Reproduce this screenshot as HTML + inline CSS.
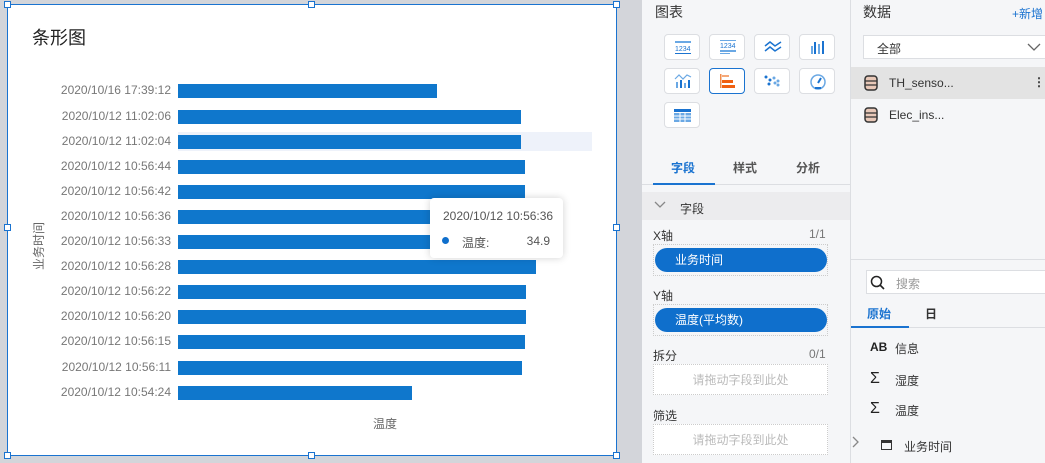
<!DOCTYPE html>
<html><head><meta charset="utf-8"><style>
*{margin:0;padding:0;box-sizing:border-box}
body{width:1045px;height:463px;overflow:hidden;background:#d3d5da;font-family:"Liberation Sans","Noto Sans CJK SC",sans-serif;position:relative;font-size:12px;color:#333}
.abs{position:absolute}
.card{left:7px;top:4px;width:610px;height:452px;background:#fff;border:1px solid #1a73d0}
.h{position:absolute;width:7px;height:7px;background:#fff;border:1px solid #1a73d0}
.lbl{position:absolute;left:40px;width:131px;text-align:right;font-size:12px;color:#777;line-height:14px}
.bar{position:absolute;left:178px;height:14px;background:#0f77cc}
.panel{left:642px;top:0;width:208px;height:463px;background:#f5f6f8}
.panel2{left:850px;top:0;width:195px;height:463px;background:#f5f6f8;border-left:1px solid #dcdee2}
.btn{position:absolute;width:36px;height:26px;background:#fff;border:1px solid #dcdee2;border-radius:4px}
.btn svg{position:absolute;left:8px;top:3px}
.pill{position:absolute;left:655px;width:172px;height:24px;background:#0f6fcc;border-radius:12px;color:#fff;font-size:12px;line-height:24px;padding-left:20px}
.drop{position:absolute;left:653px;width:175px;height:31px;border:1px dotted #ccc;background:#fff;color:#bbb;text-align:center;line-height:31px;font-size:12px}
</style></head><body>
<div class="abs card"></div>
<div class="h" style="left:4px;top:1px"></div><div class="h" style="left:308px;top:1px"></div><div class="h" style="left:613px;top:1px"></div>
<div class="h" style="left:4px;top:224px"></div><div class="h" style="left:613px;top:224px"></div>
<div class="h" style="left:4px;top:452px"></div><div class="h" style="left:308px;top:452px"></div><div class="h" style="left:613px;top:452px"></div>
<div class="abs" style="left:32px;top:24px;font-size:18px;color:#222">条形图</div>
<div class="abs" style="left:178px;top:132px;width:414px;height:19px;background:#eef2fa"></div>
<div class="abs" style="left:30px;top:270px;transform:rotate(-90deg);transform-origin:left top;font-size:12px;color:#666;width:60px">业务时间</div>
<div class="lbl" style="top:83px">2020/10/16 17:39:12</div><div class="bar" style="top:84px;width:259px"></div>
<div class="lbl" style="top:109px">2020/10/12 11:02:06</div><div class="bar" style="top:110px;width:343px"></div>
<div class="lbl" style="top:134px">2020/10/12 11:02:04</div><div class="bar" style="top:135px;width:343px"></div>
<div class="lbl" style="top:159px">2020/10/12 10:56:44</div><div class="bar" style="top:160px;width:347px"></div>
<div class="lbl" style="top:184px">2020/10/12 10:56:42</div><div class="bar" style="top:185px;width:347px"></div>
<div class="lbl" style="top:209px">2020/10/12 10:56:36</div><div class="bar" style="top:210px;width:347px"></div>
<div class="lbl" style="top:234px">2020/10/12 10:56:33</div><div class="bar" style="top:235px;width:347px"></div>
<div class="lbl" style="top:259px">2020/10/12 10:56:28</div><div class="bar" style="top:260px;width:358px"></div>
<div class="lbl" style="top:284px">2020/10/12 10:56:22</div><div class="bar" style="top:285px;width:348px"></div>
<div class="lbl" style="top:309px">2020/10/12 10:56:20</div><div class="bar" style="top:310px;width:348px"></div>
<div class="lbl" style="top:334px">2020/10/12 10:56:15</div><div class="bar" style="top:335px;width:347px"></div>
<div class="lbl" style="top:360px">2020/10/12 10:56:11</div><div class="bar" style="top:361px;width:344px"></div>
<div class="lbl" style="top:385px">2020/10/12 10:54:24</div><div class="bar" style="top:386px;width:234px"></div>
<div class="abs" style="left:373px;top:415px;color:#666">温度</div>
<div class="abs" style="left:430px;top:198px;width:133px;height:60px;background:#fff;border-radius:4px;box-shadow:0 0 8px rgba(0,0,0,.18)">
<div class="abs" style="left:13px;top:11px;color:#555">2020/10/12 10:56:36</div>
<div class="abs" style="left:12px;top:39px;width:7px;height:7px;border-radius:50%;background:#0f6fcc"></div>
<div class="abs" style="left:32px;top:36px;color:#555">温度:</div>
<div class="abs" style="right:13px;top:36px;color:#555">34.9</div>
</div>
<div class="abs panel"></div>
<div class="abs" style="left:655px;top:2px;font-size:14px;color:#333">图表</div>
<div class="btn" style="left:664px;top:34px"><svg width="20" height="18"><rect x="2" y="3" width="16" height="2" fill="#6aa8e4"/><text x="2" y="13" font-size="7" fill="#1a73d0" font-family="Liberation Sans">1234</text><rect x="2" y="15" width="16" height="1" fill="#1a73d0"/></svg></div>
<div class="btn" style="left:709px;top:34px"><svg width="20" height="18"><rect x="2" y="2" width="16" height="1" fill="#6aa8e4"/><text x="2" y="10" font-size="7" fill="#1a73d0" font-family="Liberation Sans">1234</text><rect x="2" y="12" width="16" height="2" fill="#6aa8e4"/><rect x="2" y="15" width="10" height="1" fill="#6aa8e4"/></svg></div>
<div class="btn" style="left:754px;top:34px"><svg width="20" height="18"><path d="M2 8 L7 4 L12 8 L18 4 M2 13 L7 9 L12 13 L18 9" stroke="#1a73d0" stroke-width="1.5" fill="none"/></svg></div>
<div class="btn" style="left:799px;top:34px"><svg width="20" height="18"><rect x="3" y="8" width="2" height="8" fill="#6aa8e4"/><rect x="6" y="4" width="2" height="12" fill="#1a73d0"/><rect x="10" y="6" width="2" height="10" fill="#6aa8e4"/><rect x="14" y="3" width="2" height="13" fill="#1a73d0"/></svg></div>
<div class="btn" style="left:664px;top:68px"><svg width="20" height="18"><path d="M2 7 L6 3 L10 7 L14 3 L18 5" stroke="#6aa8e4" stroke-width="1.2" fill="none"/><rect x="3" y="10" width="2" height="6" fill="#6aa8e4"/><rect x="7" y="8" width="2" height="8" fill="#1a73d0"/><rect x="11" y="11" width="2" height="5" fill="#6aa8e4"/><rect x="15" y="8" width="2" height="8" fill="#1a73d0"/></svg></div>
<div class="btn" style="left:709px;top:68px;border-color:#1a73d0"><svg width="20" height="18"><rect x="2" y="2" width="1.5" height="14" fill="#f08c4b"/><rect x="4" y="3" width="7" height="2" fill="#f5a878"/><rect x="4" y="8" width="11" height="3" fill="#f06010"/><rect x="4" y="13" width="13" height="3" fill="#f06010"/></svg></div>
<div class="btn" style="left:754px;top:68px"><svg width="20" height="18"><circle cx="3" cy="5" r="1.5" fill="#1a73d0"/><circle cx="7" cy="8" r="1.5" fill="#1a73d0"/><circle cx="11" cy="6" r="1.5" fill="#6aa8e4"/><circle cx="15" cy="9" r="1.5" fill="#6aa8e4"/><circle cx="6" cy="12" r="1.5" fill="#1a73d0"/><circle cx="12" cy="11" r="1.5" fill="#6aa8e4"/><circle cx="15" cy="13" r="1.5" fill="#6aa8e4"/></svg></div>
<div class="btn" style="left:799px;top:68px"><svg width="20" height="18"><circle cx="10" cy="10" r="7" stroke="#6aa8e4" stroke-width="1.5" fill="none"/><path d="M10 11 L13 6" stroke="#1a73d0" stroke-width="2"/><rect x="7" y="15" width="6" height="2" fill="#1a73d0"/></svg></div>
<div class="btn" style="left:664px;top:102px"><svg width="20" height="18"><rect x="1" y="3" width="17" height="3" fill="#1a73d0"/><rect x="1" y="7" width="17" height="9" fill="#6aa8e4"/><path d="M1 10H18M1 13H18M7 7V16M12 7V16" stroke="#fff" stroke-width="1"/></svg></div>
<div class="abs" style="left:671px;top:159px;color:#1a73d0;font-weight:bold">字段</div>
<div class="abs" style="left:733px;top:159px;color:#555;font-weight:bold">样式</div>
<div class="abs" style="left:796px;top:159px;color:#555;font-weight:bold">分析</div>
<div class="abs" style="left:642px;top:184px;width:208px;height:1px;background:#dcdee2"></div>
<div class="abs" style="left:653px;top:183px;width:62px;height:2px;background:#1a73d0"></div>
<div class="abs" style="left:642px;top:192px;width:208px;height:28px;background:#ececee"></div>
<svg class="abs" style="left:654px;top:201px" width="12" height="8"><path d="M1 1 L6 6 L11 1" stroke="#888" stroke-width="1.3" fill="none"/></svg>
<div class="abs" style="left:680px;top:200px;color:#333">字段</div>
<div class="abs" style="left:653px;top:227px">X轴</div><div class="abs" style="left:809px;top:227px;color:#777">1/1</div>
<div class="abs" style="left:653px;top:244px;width:175px;height:32px;border:1px dotted #ccc"></div>
<div class="pill" style="top:248px">业务时间</div>
<div class="abs" style="left:653px;top:287px">Y轴</div>
<div class="abs" style="left:653px;top:304px;width:175px;height:32px;border:1px dotted #ccc"></div>
<div class="pill" style="top:308px">温度(平均数)</div>
<div class="abs" style="left:653px;top:347px">拆分</div><div class="abs" style="left:809px;top:347px;color:#777">0/1</div>
<div class="drop" style="top:364px">请拖动字段到此处</div>
<div class="abs" style="left:653px;top:407px">筛选</div>
<div class="drop" style="top:424px">请拖动字段到此处</div>
<div class="abs panel2"></div>
<div class="abs" style="left:863px;top:2px;font-size:14px;color:#333">数据</div>
<div class="abs" style="left:1012px;top:5px;color:#1a73d0">+新增</div>
<div class="abs" style="left:863px;top:35px;width:185px;height:24px;background:#fff;border:1px solid #dcdee2;padding:4px 13px">全部</div>
<svg class="abs" style="left:1027px;top:43px" width="14" height="8"><path d="M1 1 L7 7 L13 1" stroke="#666" stroke-width="1.3" fill="none"/></svg>
<div class="abs" style="left:851px;top:67px;width:194px;height:32px;background:#e3e3e3"></div>
<svg class="abs" style="left:864px;top:75px" width="14" height="16"><rect x="1" y="1" width="12" height="14" rx="3" fill="#e8c8b8" stroke="#333" stroke-width="1.5"/><path d="M1 6H13M1 10H13" stroke="#333" stroke-width="1.2"/></svg>
<div class="abs" style="left:889px;top:76px;color:#333">TH_senso...</div>
<div class="abs" style="left:1033px;top:75px;font-weight:bold">⋮</div>
<svg class="abs" style="left:864px;top:107px" width="14" height="16"><rect x="1" y="1" width="12" height="14" rx="3" fill="#e8c8b8" stroke="#333" stroke-width="1.5"/><path d="M1 6H13M1 10H13" stroke="#333" stroke-width="1.2"/></svg>
<div class="abs" style="left:889px;top:108px;color:#333">Elec_ins...</div>
<div class="abs" style="left:851px;top:259px;width:194px;height:1px;background:#dcdee2"></div>
<div class="abs" style="left:866px;top:270px;width:180px;height:24px;background:#fff;border:1px solid #dcdee2"></div>
<svg class="abs" style="left:870px;top:275px" width="16" height="16"><circle cx="6.5" cy="6.5" r="5" stroke="#222" stroke-width="1.5" fill="none"/><path d="M10 10 L14 14" stroke="#222" stroke-width="1.6"/></svg>
<div class="abs" style="left:896px;top:275px;color:#999">搜索</div>
<div class="abs" style="left:867px;top:305px;color:#1a73d0;font-weight:bold">原始</div>
<div class="abs" style="left:925px;top:305px;color:#333;font-weight:bold">日</div>
<div class="abs" style="left:851px;top:327px;width:194px;height:1px;background:#dcdee2"></div>
<div class="abs" style="left:851px;top:326px;width:58px;height:2px;background:#1a73d0"></div>
<div class="abs" style="left:870px;top:340px;font-weight:bold;color:#222">AB</div><div class="abs" style="left:895px;top:340px">信息</div>
<div class="abs" style="left:870px;top:369px;font-size:16px;color:#222;line-height:20px">Σ</div><div class="abs" style="left:895px;top:372px">湿度</div>
<div class="abs" style="left:870px;top:399px;font-size:16px;color:#222;line-height:20px">Σ</div><div class="abs" style="left:895px;top:402px">温度</div>
<svg class="abs" style="left:852px;top:436px" width="8" height="12"><path d="M1 1 L6 6 L1 11" stroke="#888" stroke-width="1.3" fill="none"/></svg>
<div class="abs" style="left:881px;top:440px;width:11px;height:10px;border:1.5px solid #333;border-top-width:3px"></div>
<div class="abs" style="left:904px;top:438px">业务时间</div>
</body></html>
